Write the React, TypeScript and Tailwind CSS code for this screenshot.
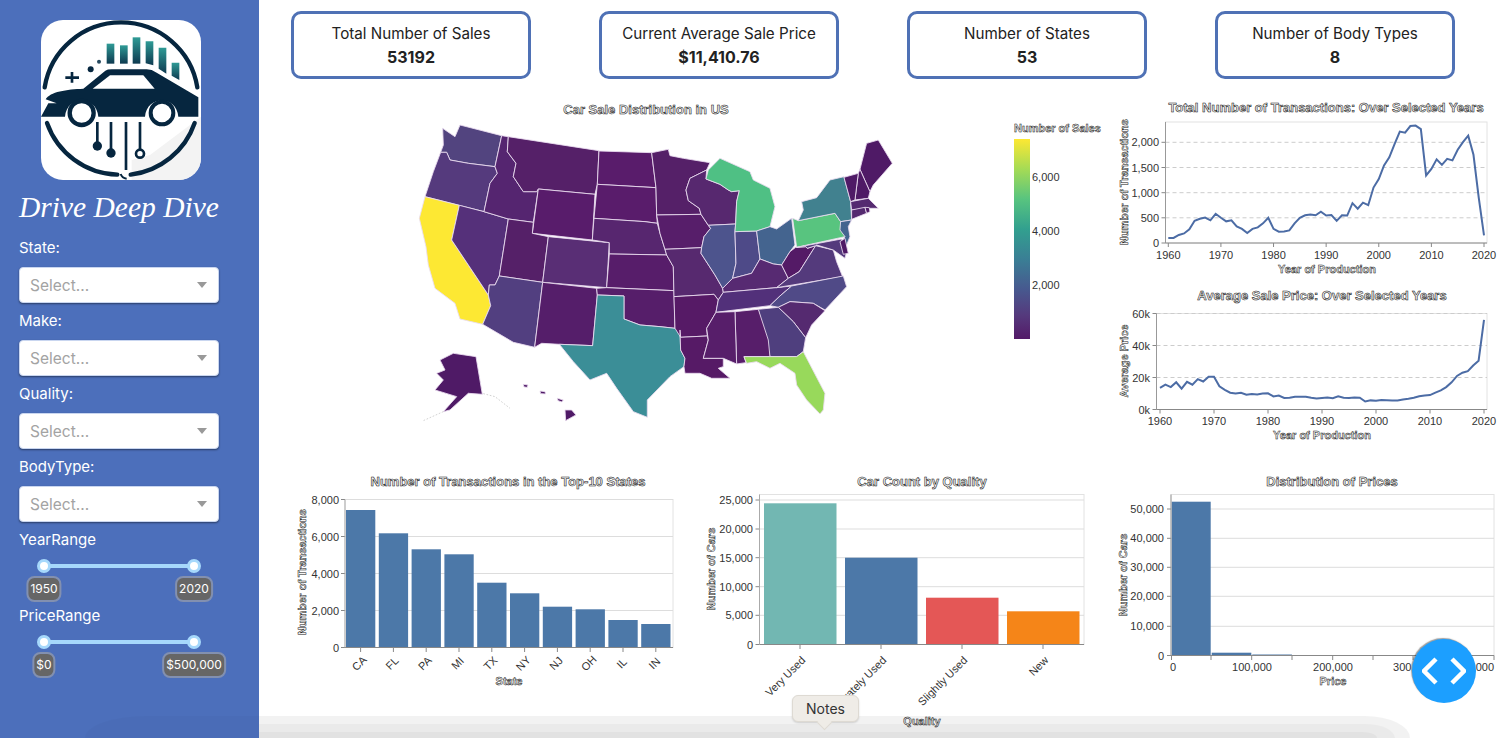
const years = Array.from({ length: 61 }, (_, i) => 1960 + i)
const totals = [100,100,160,190,270,440,480,505,450,580,500,430,450,330,280,200,280,310,390,500,280,225,230,250,390,500,550,565,550,620,545,555,440,550,545,790,680,800,750,1100,1270,1540,1700,1960,2210,2190,2320,2330,2260,1340,1470,1660,1550,1670,1640,1850,2000,2130,1750,900,150]
const prices = [13.5,15.5,14,17,13,17.3,15.5,19,17.5,20.5,20.5,14.5,12.3,10.5,10,10.5,9.2,9.7,9.4,10,10.1,8.2,8.7,7.2,7.4,8,8,8,7.3,6.9,7.2,7.5,7,8.2,7.3,7.2,7.5,7.4,5,5.7,5.4,5.9,5.8,5.6,5.7,6.3,6.7,7.3,8.3,8.8,9,10.6,12,14,17,21,23,24,27.5,30.5,56]

const states: { c: string; p: string }[] = [
  { c: '#52447f', p: '180,90 305,122 285,215 205,205 150,195 140,172 122,172 130,150 128,100 165,125' }, // WA
  { c: '#553a7d', p: '122,172 140,172 150,195 205,205 285,215 292,235 270,265 252,350 75,305 100,230' }, // OR
  { c: '#fde833', p: '75,305 178,331 155,435 265,600 272,632 248,688 180,672 165,625 105,580 85,510 78,455 58,370' }, // CA
  { c: '#55307a', p: '178,331 252,350 325,372 298,543 285,570 268,570 265,600 155,435' }, // NV
  { c: '#552570', p: '305,122 325,125 322,170 348,205 340,245 370,290 410,290 415,282 400,382 325,372 252,350 270,265 292,235 285,215' }, // ID
  { c: '#552068', p: '325,125 597,167 592,268 585,298 415,282 410,290 370,290 340,245 348,205 322,170' }, // MT
  { c: '#581c6b', p: '415,282 585,298 577,435 397,415' }, // WY
  { c: '#552068', p: '325,372 400,382 397,415 445,425 428,562 298,543' }, // UT
  { c: '#592e75', p: '445,425 628,443 620,578 428,562' }, // CO
  { c: '#523f80', p: '298,543 428,562 404,757 340,742 248,688 272,632 265,600 268,570 285,570' }, // AZ
  { c: '#551e6a', p: '428,562 590,580 592,600 578,752 478,748 425,745 404,757' }, // NM
  { c: '#591c6b', p: '597,168 755,173 768,278 592,268' }, // ND
  { c: '#591c6b', p: '592,268 768,278 770,360 772,385 735,380 582,370' }, // SD
  { c: '#57266f', p: '582,370 735,380 772,385 780,415 795,463 800,480 628,477 628,443 577,435' }, // NE
  { c: '#571d6a', p: '628,477 800,480 820,515 822,587 620,578' }, // KS
  { c: '#561e6a', p: '590,580 620,578 822,587 825,700 780,695 720,690 672,672 672,603 592,600' }, // OK
  { c: '#3b8e97', p: '592,600 672,603 672,672 720,690 780,695 825,700 840,705 842,765 855,790 852,815 810,845 742,915 742,967 700,950 650,880 620,835 570,855 520,800 478,748 578,752' }, // TX
  { c: '#552068', p: '755,173 805,163 810,182 850,190 930,203 920,225 870,250 858,285 865,317 898,340 903,358 770,360 768,278' }, // MN
  { c: '#571e6a', p: '770,360 903,358 925,391 932,400 912,425 905,458 795,463 780,415' }, // IA
  { c: '#57296f', p: '795,463 905,458 903,475 945,540 968,580 970,592 955,615 942,598 822,605 820,515 800,480' }, // MO
  { c: '#561a66', p: '822,605 942,598 955,615 948,652 920,700 922,723 842,727 825,700' }, // AR
  { c: '#561a66', p: '842,727 922,723 925,735 910,790 970,790 970,815 955,820 990,850 935,850 900,835 855,835 852,815 855,790 842,765 840,705' }, // LA
  { c: '#57286f', p: '920,225 918,252 960,268 985,285 995,290 1018,287 1010,320 1007,387 925,391 903,358 898,340 865,317 858,285 870,250' }, // WI
  { c: '#4d548d', p: '925,391 1007,387 1005,410 1008,505 998,550 968,580 945,540 903,475 905,458 912,425 932,400' }, // IL
  { c: '#4e4a88', p: '1005,410 1070,408 1080,492 1055,535 998,550 1008,505' }, // IN
  { c: '#4fc084', p: '918,252 925,225 960,190 1050,230 1060,255 1110,280 1125,335 1110,395 1070,408 1005,410 1007,387 1010,320 1018,287 995,290 985,285 960,268' }, // MI
  { c: '#44648f', p: '1070,408 1110,395 1130,402 1175,370 1185,450 1170,470 1145,510 1120,507 1080,492' }, // OH
  { c: '#572a72', p: '970,592 968,580 998,550 1055,535 1080,492 1120,507 1145,510 1165,550 1130,578' }, // KY
  { c: '#52307a', p: '970,592 1130,578 1175,573 1140,603 1110,632 948,652 955,615' }, // TN
  { c: '#541a66', p: '1145,510 1170,470 1187,457 1218,455 1222,460 1247,452 1220,495 1198,530 1165,550' }, // WV
  { c: '#543a7c', p: '1130,578 1165,550 1198,530 1220,495 1247,452 1300,465 1310,500 1328,545' }, // VA
  { c: '#504a87', p: '1175,573 1330,543 1340,575 1275,645 1240,625 1170,620 1135,637 1110,632 1140,603' }, // NC
  { c: '#552a70', p: '1135,637 1170,620 1240,625 1275,647 1235,690 1217,728 1180,680' }, // SC
  { c: '#4f3f7e', p: '1075,643 1135,637 1180,680 1217,728 1210,770 1190,785 1110,785' }, // GA
  { c: '#571e6a', p: '1005,650 1075,643 1105,735 1110,785 1032,785 1038,803 1010,807' }, // AL
  { c: '#571e6a', p: '948,652 1005,650 1010,807 970,790 910,790 925,735 920,700' }, // MS
  { c: '#98d95b', p: '1032,785 1110,785 1190,785 1210,770 1275,895 1270,945 1260,957 1220,915 1190,870 1185,835 1140,805 1110,820 1070,800 1040,805' }, // FL
  { c: '#58c47f', p: '1178,370 1195,377 1305,355 1322,380 1335,425 1190,457' }, // PA
  { c: '#41818f', p: '1195,377 1210,345 1205,320 1250,308 1290,255 1332,245 1352,320 1355,375 1322,380 1305,355' }, // NY
  { c: '#44648f', p: '1322,380 1355,375 1345,395 1350,425 1340,450 1325,440 1335,425 1320,405' }, // NJ
  { c: '#543a7c', p: '1190,457 1325,432 1340,470 1335,490 1300,465 1250,450 1247,452 1222,460 1218,455' }, // MD
  { c: '#4f1a66', p: '1320,440 1335,430 1345,475 1330,478' }, // DE
  { c: '#4f1a66', p: '1400,145 1435,135 1477,205 1420,270 1410,290 1380,223' }, // ME
  { c: '#4f1a66', p: '1375,235 1380,223 1410,290 1405,310 1365,315' }, // NH
  { c: '#4f1a66', p: '1332,247 1375,235 1365,315 1352,320' }, // VT
  { c: '#552a70', p: '1352,320 1405,310 1435,340 1410,340 1355,345' }, // MA
  { c: '#552a70', p: '1355,345 1395,337 1400,355 1355,373' }, // CT
  { c: '#4f1a66', p: '1395,337 1408,338 1410,350 1400,355' }, // RI
  { c: '#4f1a66', p: '160,775 228,785 247,898 205,895 150,945 130,950 170,905 105,885 130,855 110,835 135,825 120,795' }, // AK
  { c: '#4f1a66', p: '495,945 515,945 528,960 497,977' }, // HI
  { c: '#4f1a66', p: '420,888 435,890 437,897 422,896' },
  { c: '#4f1a66', p: '370,868 384,870 382,877 372,876' },
  { c: '#4f1a66', p: '472,910 490,915 485,921 474,917' },
]

const titleCls = 'fill-[#f4f4f4] stroke-[#111] stroke-[0.55] font-bold text-[13px] opacity-[0.99]'
const labelCls = 'fill-[#333] text-[11px]'
const axisTitleCls = 'fill-[#f4f4f4] stroke-[#111] stroke-[0.5] font-bold text-[11px] opacity-[0.99]'

function Title({ x, y, children, cls = titleCls }: { x: number; y: number; children: string; cls?: string }) {
  return <text x={x} y={y} textAnchor="middle" className={cls}>{children}</text>
}

function YTitle({ x, y, children }: { x: number; y: number; children: string }) {
  return <text transform={`translate(${x} ${y}) rotate(-90)`} textAnchor="middle" className={axisTitleCls}>{children}</text>
}

function YearChart(props: {
  box: string; w: number; h: number; data: number[]; left: number; top: number; base: number; x0: number; scale: number
  ticks: [string, number][]; labelX: number; title: string; titleX: number; titleY: number; yTitle: string; yTitleY: number
  xLabelY: number; xTitleX: number; xTitleY: number
}) {
  const step = (1484 - props.x0) / 60
  const pts = props.data.map((v, i) => `${props.x0 + i * step},${props.base - v * props.scale}`).join(' ')
  return (
    <svg viewBox={props.box} width={props.w} height={props.h} className="block">
      <Title x={props.titleX} y={props.titleY}>{props.title}</Title>
      <rect x={props.left} y={props.top} width={1487 - props.left} height={props.base - props.top} fill="none" stroke="#e2e2e2" />
      {props.ticks.map(([label, y]) => (
        <g key={label}>
          {y !== props.base && <line x1={props.left} x2={1487} y1={y} y2={y} stroke="#ccc" strokeDasharray="4 3" />}
          <line x1={props.left - 4} x2={props.left} y1={y} y2={y} stroke="#888" />
          <text x={props.labelX} y={y + 4} textAnchor="end" className={labelCls}>{label}</text>
        </g>
      ))}
      <line x1={props.left} x2={props.left} y1={props.top} y2={props.base} stroke="#999" />
      <line x1={props.left} x2={1487} y1={props.base} y2={props.base} stroke="#888" />
      {years.filter((y) => y % 10 === 0).map((y) => {
        const x = props.x0 + (y - 1960) * step
        return (
          <g key={y}>
            <line x1={x} x2={x} y1={props.base} y2={props.base + 4} stroke="#888" />
            <text x={x} y={props.xLabelY} textAnchor="middle" className={labelCls}>{y}</text>
          </g>
        )
      })}
      <polyline points={pts} fill="none" stroke="#4c6ca5" strokeWidth="2" />
      <Title x={props.xTitleX} y={props.xTitleY} cls={axisTitleCls}>Year of Production</Title>
      <YTitle x={1128} y={props.yTitleY}>{props.yTitle}</YTitle>
    </svg>
  )
}

function Frame({ left, right, top, base, ticks, labelX }: { left: number; right: number; top: number; base: number; ticks: [string, number][]; labelX: number }) {
  return (
    <g>
      <rect x={left} y={top} width={right - left} height={base - top} fill="none" stroke="#e2e2e2" />
      {ticks.map(([label, y]) => (
        <g key={label}>
          {y !== base && <line x1={left} x2={right} y1={y} y2={y} stroke="#ddd" />}
          <line x1={left - 4} x2={left} y1={y} y2={y} stroke="#888" />
          <text x={labelX} y={y + 4} textAnchor="end" className={labelCls}>{label}</text>
        </g>
      ))}
    </g>
  )
}

function TopStates() {
  const tops = [510, 533.3, 549.3, 554.3, 582.7, 593.3, 606.7, 609.3, 620, 624]
  const names = ['CA', 'FL', 'PA', 'MI', 'TX', 'NY', 'NJ', 'OH', 'IL', 'IN']
  return (
    <svg viewBox="280 465 410 273" width={410} height={273} className="block">
      <Title x={508} y={486}>Number of Transactions in the Top-10 States</Title>
      <Frame left={345} right={673} top={499.5} base={647.5} labelX={339} ticks={[['8,000', 499.5], ['6,000', 536.5], ['4,000', 573.5], ['2,000', 610.5], ['0', 647.5]]} />
      {tops.map((t, i) => {
        const x = 346 + i * 32.8
        return (
          <g key={names[i]}>
            <rect x={x} y={t} width={29.3} height={647.5 - t} fill="#4c78a8" />
            <line x1={x + 14.6} x2={x + 14.6} y1={647.5} y2={652} stroke="#888" />
            <text transform={`translate(${x + 16} ${666}) rotate(-45)`} textAnchor="middle" className={labelCls}>{names[i]}</text>
          </g>
        )
      })}
      <line x1={345} x2={673} y1={647.5} y2={647.5} stroke="#888" />
      <line x1={345} x2={345} y1={499.5} y2={647.5} stroke="#aaa" />
      <Title x={509} y={685} cls={axisTitleCls}>State</Title>
      <YTitle x={306} y={572}>Number of Transactions</YTitle>
    </svg>
  )
}

function Quality() {
  const bars = [
    { n: 'Very Used', x: 764, t: 503.3, c: '#72b7b2' },
    { n: 'Moderately Used', x: 845, t: 557.7, c: '#4c78a8' },
    { n: 'Slightly Used', x: 926, t: 597.7, c: '#e45756' },
    { n: 'New', x: 1007, t: 611.3, c: '#f58518' },
  ]
  return (
    <svg viewBox="690 465 410 273" width={410} height={273} className="block">
      <Title x={922} y={486}>Car Count by Quality</Title>
      <Frame left={759.5} right={1084} top={494.5} base={644.5} labelX={753} ticks={[['25,000', 500], ['20,000', 529], ['15,000', 557.7], ['10,000', 586.7], ['5,000', 615.3], ['0', 644.5]]} />
      {bars.map((b) => (
        <g key={b.n}>
          <rect x={b.x} y={b.t} width={72.5} height={644.5 - b.t} fill={b.c} />
          <line x1={b.x + 36} x2={b.x + 36} y1={644.5} y2={649} stroke="#888" />
          <text transform={`translate(${b.x + 42} ${661}) rotate(-45)`} textAnchor="end" className={labelCls}>{b.n}</text>
        </g>
      ))}
      <line x1={759.5} x2={1084} y1={644.5} y2={644.5} stroke="#888" />
      <line x1={759.5} x2={759.5} y1={494.5} y2={644.5} stroke="#aaa" />
      <Title x={922} y={725} cls={axisTitleCls}>Quality</Title>
      <YTitle x={715} y={569}>Number of Cars</YTitle>
    </svg>
  )
}

function PriceHist() {
  const xTicks = [1171.5, 1211, 1251.7, 1292, 1332.7, 1373, 1413, 1453, 1494]
  return (
    <svg viewBox="1100 465 410 273" width={410} height={273} className="block">
      <Title x={1332} y={486}>Distribution of Prices</Title>
      <Frame left={1171} right={1494} top={494.5} base={655.5} labelX={1164} ticks={[['50,000', 509], ['40,000', 538.3], ['30,000', 567.3], ['20,000', 596.3], ['10,000', 626.3], ['0', 655.5]]} />
      <rect x={1171.7} y={501.7} width={39} height={154} fill="#4c78a8" />
      <rect x={1211.7} y={652.7} width={39.6} height={3} fill="#4c78a8" />
      <rect x={1252.3} y={654.5} width={39.6} height={1} fill="#4c78a8" />
      {xTicks.map((x) => <line key={x} x1={x} x2={x} y1={655.5} y2={660} stroke="#888" />)}
      <line x1={1171} x2={1494} y1={655.5} y2={655.5} stroke="#888" />
      <line x1={1171} x2={1171} y1={494.5} y2={655.5} stroke="#999" />
      <text x={1173} y={671} textAnchor="middle" className={labelCls}>0</text>
      <text x={1252} y={671} textAnchor="middle" className={labelCls}>100,000</text>
      <text x={1333} y={671} textAnchor="middle" className={labelCls}>200,000</text>
      <text x={1413} y={671} textAnchor="middle" className={labelCls}>300,000</text>
      <text x={1494} y={671} textAnchor="end" className={labelCls}>400,000</text>
      <Title x={1333} y={685} cls={axisTitleCls}>Price</Title>
      <YTitle x={1127} y={575}>Number of Cars</YTitle>
    </svg>
  )
}

function UsMap() {
  return (
    <svg viewBox="280 95 830 370" width={830} height={370} className="block">
      <defs>
        <linearGradient id="viridis" x1="0" y1="0" x2="0" y2="1">
          <stop offset="0" stopColor="#fde833" />
          <stop offset="0.15" stopColor="#a5db55" />
          <stop offset="0.3" stopColor="#58c47f" />
          <stop offset="0.45" stopColor="#32a08f" />
          <stop offset="0.6" stopColor="#3a7f95" />
          <stop offset="0.75" stopColor="#47598f" />
          <stop offset="0.88" stopColor="#553a7d" />
          <stop offset="1" stopColor="#541a68" />
        </linearGradient>
      </defs>
      <Title x={646} y={114}>Car Sale Distribution in US</Title>
      <g transform="translate(400 95) scale(0.3333)">
        {states.map((s) => <polygon key={s.p} points={s.p} fill={s.c} stroke="#eadcf0" strokeWidth="2.6" strokeLinejoin="round" />)}
        <path d="M250 896 L285 905 L330 940 M130 950 L70 977" fill="none" stroke="#bbb" strokeWidth="2" strokeDasharray="5 5" />
      </g>
      <text x={1014} y={132} className={axisTitleCls}>Number of Sales</text>
      <rect x={1014} y={139} width={16} height={200} fill="url(#viridis)" />
      {[['6,000', 176.7], ['4,000', 230.7], ['2,000', 284.7]].map(([l, y]) => (
        <text key={l} x={1032} y={Number(y) + 4} className={labelCls}>{l}</text>
      ))}
    </svg>
  )
}

function Logo() {
  const navy = '#06263f'
  return (
    <svg viewBox="123 60 480 480" className="block w-[160px] h-[160px] rounded-[22px] bg-white">
      <defs>
        <linearGradient id="bar" x1="0" y1="0" x2="0" y2="1">
          <stop offset="0" stopColor="#2f9b96" />
          <stop offset="1" stopColor="#0e3a50" />
        </linearGradient>
      </defs>
      <polygon points="395,480 450,465 603,350 603,540 395,540" fill="#f3f3f3" />
      <g fill="none" stroke={navy} strokeLinecap="round" strokeWidth="13">
        <path d="M134 262 A232 232 0 0 1 592 262" />
        <path d="M141 369 A232 232 0 0 0 352 524" />
        <path d="M392 524 A232 232 0 0 0 584 369" />
      </g>
      <g fill="url(#bar)">
        <rect x="320" y="131" width="23" height="60" />
        <rect x="360" y="136" width="23" height="55" />
        <rect x="398" y="112" width="23" height="79" />
        <polygon points="437,124 460,124 460,196 437,190" />
        <polygon points="476,143 499,143 499,221 476,206" />
        <polygon points="515,188 538,188 538,240 515,227" />
      </g>
      <circle cx="272" cy="208" r="9" fill={navy} />
      <circle cx="297" cy="185" r="6" fill="#274a60" />
      <path d="M196 233 H237 M216 216 V248" stroke={navy} strokeWidth="8" />
      <path fill={navy} d="M123 350 L145 310 H170 L137 298 C150 275 200 268 250 266 L316 212 Q322 208 335 208 H440 Q455 208 470 218 L595 292 V350 H535 C530 285 440 285 435 350 H295 C290 285 200 285 195 350 Z" />
      <polygon points="278,266 330,226 430,226 464,266" fill="#fff" />
      <circle cx="245" cy="339" r="36" fill="#fff" stroke={navy} strokeWidth="13" />
      <circle cx="486" cy="339" r="34" fill="#fff" stroke={navy} strokeWidth="12" />
      <g stroke={navy} strokeWidth="8" fill="none">
        <path d="M292 366 V430 M333 366 V450 M378 366 V510 M420 366 V450" />
      </g>
      <circle cx="292" cy="438" r="14" fill={navy} />
      <circle cx="333" cy="459" r="14" fill={navy} />
      <circle cx="420" cy="461" r="12" fill="#fff" stroke={navy} strokeWidth="8" />
      <path d="M362 522 Q366 534 380 536" stroke={navy} strokeWidth="6" fill="none" />
    </svg>
  )
}

function Dropdown({ label }: { label: string }) {
  return (
    <div>
      <div className="pt-[6px] pb-[7px] leading-[24px] text-[15px] text-white">{label}</div>
      <div className="flex h-[36px] w-[200px] items-center justify-between rounded-[4px] border border-[#c9d6f0] bg-white pl-[10px] pr-[11px] shadow-[0_1px_2px_rgba(0,0,0,0.45)]">
        <span className="pt-[2px] text-[15.5px] text-[#a3a3a3]">Select...</span>
        <svg width="10" height="6" viewBox="0 0 10 6"><polygon points="0,0 10,0 5,6" fill="#999" /></svg>
      </div>
    </div>
  )
}

function RangeSlider({ label, from, to }: { label: string; from: string; to: string }) {
  const pill = 'absolute top-[25px] h-[26px] -translate-x-1/2 rounded-lg border-2 border-[#8290b0] bg-[#666] px-[2px] text-[12px] leading-[22px] text-white whitespace-nowrap'
  const thumb = 'absolute top-[8px] h-[14px] w-[14px] -translate-x-1/2 rounded-full border-[3px] border-[#a6d8fb] bg-white'
  return (
    <div>
      <div className="pt-[1px] h-[24px] leading-[24px] text-[15px] text-white">{label}</div>
      <div className="relative ml-[25px] h-[52px] w-[150px]">
        <div className="absolute top-[13px] h-[4px] w-full bg-[#a6d8fb]" />
        <div className={`${thumb} left-0`} />
        <div className={`${thumb} left-full`} />
        <div className={`${pill} left-0`}>{from}</div>
        <div className={`${pill} left-full`}>{to}</div>
      </div>
    </div>
  )
}

function Kpi({ title, value }: { title: string; value: string }) {
  return (
    <div className="flex h-[68px] w-[240px] flex-col items-center justify-center rounded-[10px] border-[3px] border-[#4f71b5] bg-white text-[#222]">
      <div className="pt-[1px] text-[15.2px] leading-[23px]">{title}</div>
      <div className="text-[16px] font-bold leading-[24px]">{value}</div>
    </div>
  )
}

export default function App() {
  return (
    <div className="relative flex h-[738px] w-[1510px] overflow-hidden bg-white font-['Inter',sans-serif]">
      {/* filters */}
      <aside className="flex w-[259px] shrink-0 flex-col bg-[#4c6fbb] px-[19px] pt-[20px]">
        <div className="ml-[22px]"><Logo /></div>
        <div className="flex h-[50px] items-center whitespace-nowrap pt-[4px] font-['Liberation_Serif',serif] text-[29.5px] italic text-white">Drive Deep Dive</div>
        <Dropdown label="State:" />
        <Dropdown label="Make:" />
        <Dropdown label="Quality:" />
        <Dropdown label="BodyType:" />
        <div className="h-[5px]" />
        <RangeSlider label="YearRange" from="1950" to="2020" />
        <RangeSlider label="PriceRange" from="$0" to="$500,000" />
      </aside>

      {/* dashboard */}
      <main className="flex min-w-0 flex-1 flex-col font-['Liberation_Sans',sans-serif]">
        <div className="flex gap-[68px] pl-[32px] pt-[11px] font-['Inter',sans-serif]">
          <Kpi title="Total Number of Sales" value="53192" />
          <Kpi title="Current Average Sale Price" value="$11,410.76" />
          <Kpi title="Number of States" value="53" />
          <Kpi title="Number of Body Types" value="8" />
        </div>
        <div className="mt-[16px] flex pl-[21px]">
          <UsMap />
          <div className="flex flex-col">
            <YearChart box="1110 95 400 188" w={400} h={188} data={totals} left={1165.5} top={122} base={243} x0={1168.3} scale={0.0504}
              ticks={[['2,000', 142.3], ['1,500', 167.5], ['1,000', 192.7], ['500', 217.8], ['0', 243]]} labelX={1159}
              title="Total Number of Transactions: Over Selected Years" titleX={1326} titleY={112} yTitle="Number of Transactions" yTitleY={182}
              xLabelY={259} xTitleX={1327} xTitleY={273} />
            <YearChart box="1110 283 400 182" w={400} h={182} data={prices} left={1156.5} top={313.5} base={409.5} x0={1160} scale={1.6}
              ticks={[['60k', 313.5], ['40k', 345.5], ['20k', 377.5], ['0k', 409.5]]} labelX={1150}
              title="Average Sale Price: Over Selected Years" titleX={1322} titleY={300} yTitle="Average Price" yTitleY={361}
              xLabelY={425} xTitleX={1322} xTitleY={439} />
          </div>
        </div>
        <div className="flex pl-[21px]">
          <TopStates />
          <Quality />
          <PriceHist />
        </div>
      </main>

      {/* bottom edge of the window behind */}
      <div className="pointer-events-none absolute bottom-0 left-[85px] h-[22px] w-[174px] rounded-tl-[60px_22px] bg-black/[0.02]" />
      <div className="pointer-events-none absolute bottom-0 left-[259px] h-[22px] w-[1151px] rounded-tr-[45px_22px] bg-black/[0.05]">
        <div className="absolute bottom-0 left-0 h-[14px] w-[1136px] rounded-tr-[30px_14px] bg-black/[0.03]">
          <div className="absolute bottom-0 left-0 h-[6px] w-[1118px] rounded-tr-[14px_6px] bg-black/[0.03]" />
        </div>
      </div>

      {/* notes tooltip */}
      <div className="absolute left-[792px] top-[695px] flex h-[27px] w-[67px] items-center justify-center rounded-[6px] border border-[#dedad3] bg-[#efece7] text-[14px] text-[#333] shadow-[0_1px_2px_rgba(0,0,0,0.15)]">
        Notes
        <div className="absolute left-[26px] top-[21px] h-[11px] w-[11px] rotate-45 border-b border-r border-[#dedad3] bg-[#efece7]" />
      </div>

      {/* floating code button */}
      <div className="absolute left-[1412px] top-[639px] flex h-[64px] w-[64px] items-center justify-center rounded-full bg-[#1c9fff] shadow-[-1px_-1px_1px_rgba(60,60,60,0.5)]">
        <svg width="44" height="28" viewBox="0 0 44 28" fill="none" stroke="#fff" strokeWidth="4.5">
          <path d="M14 2 L2 14 L14 26" />
          <path d="M30 2 L42 14 L30 26" />
        </svg>
      </div>
    </div>
  )
}
